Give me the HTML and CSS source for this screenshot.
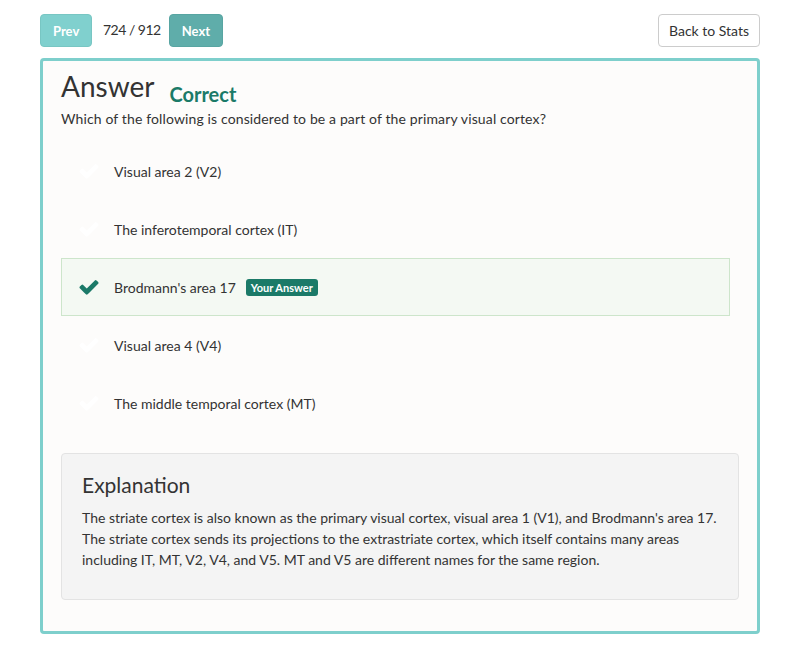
FILE: index.html
```html
<!DOCTYPE html>
<html>
<head>
<meta charset="utf-8">
<link rel="stylesheet" href="styles.css">
</head>
<body>
<div class="page">
  <div class="toolbar">
    <button class="btn btn-prev">Prev</button>
    <span class="counter">724 / 912</span>
    <button class="btn btn-next">Next</button>
    <button class="btn btn-back">Back to Stats</button>
  </div>
  <div class="card">
    <div class="heading">
      <h2 class="title">Answer</h2>
      <span class="status">Correct</span>
    </div>
    <p class="question">Which of the following is considered to be a part of the primary visual cortex?</p>
    <ul class="options">
      <li class="option">
        <svg class="check" viewBox="0 0 1792 1792"><path d="M1671 566q0 40-28 68l-724 724-136 136q-28 28-68 28t-68-28l-136-136-362-362q-28-28-28-68t28-68l136-136q28-28 68-28t68 28l294 295 656-657q28-28 68-28t68 28l136 136q28 28 28 68z"/></svg>
        <span>Visual area 2 (V2)</span>
      </li>
      <li class="option">
        <svg class="check" viewBox="0 0 1792 1792"><path d="M1671 566q0 40-28 68l-724 724-136 136q-28 28-68 28t-68-28l-136-136-362-362q-28-28-28-68t28-68l136-136q28-28 68-28t68 28l294 295 656-657q28-28 68-28t68 28l136 136q28 28 28 68z"/></svg>
        <span>The inferotemporal cortex (IT)</span>
      </li>
      <li class="option selected">
        <svg class="check" viewBox="0 0 1792 1792"><path d="M1671 566q0 40-28 68l-724 724-136 136q-28 28-68 28t-68-28l-136-136-362-362q-28-28-28-68t28-68l136-136q28-28 68-28t68 28l294 295 656-657q28-28 68-28t68 28l136 136q28 28 28 68z"/></svg>
        <span>Brodmann's area 17</span>
        <span class="badge">Your Answer</span>
      </li>
      <li class="option">
        <svg class="check" viewBox="0 0 1792 1792"><path d="M1671 566q0 40-28 68l-724 724-136 136q-28 28-68 28t-68-28l-136-136-362-362q-28-28-28-68t28-68l136-136q28-28 68-28t68 28l294 295 656-657q28-28 68-28t68 28l136 136q28 28 28 68z"/></svg>
        <span>Visual area 4 (V4)</span>
      </li>
      <li class="option">
        <svg class="check" viewBox="0 0 1792 1792"><path d="M1671 566q0 40-28 68l-724 724-136 136q-28 28-68 28t-68-28l-136-136-362-362q-28-28-28-68t28-68l136-136q28-28 68-28t68 28l294 295 656-657q28-28 68-28t68 28l136 136q28 28 28 68z"/></svg>
        <span>The middle temporal cortex (MT)</span>
      </li>
    </ul>
    <div class="explanation">
      <h3 class="exp-title">Explanation</h3>
      <p class="exp-text">The striate cortex is also known as the primary visual cortex, visual area 1 (V1), and Brodmann's area 17. The striate cortex sends its projections to the extrastriate cortex, which itself contains many areas including IT, MT, V2, V4, and V5. MT and V5 are different names for the same region.</p>
    </div>
  </div>
</div>
</body>
</html>
```

FILE: styles.css
```css
* { box-sizing: border-box; }
body {
  margin: 0;
  background: #fff;
  color: #333;
  font-family: Lato, "Open Sans", sans-serif;
  font-size: 14px;
}
.page { padding: 14px 40px; }
.toolbar {
  display: flex;
  align-items: center;
  height: 33px;
}
.btn {
  font-family: inherit;
  height: 33px;
  border-radius: 4px;
  font-size: 13px;
  cursor: pointer;
  padding: 0 12px;
}
.btn-prev {
  width: 52px;
  background: #80d0ce;
  border: 1px solid #78c6c3;
  color: #fff;
  font-weight: 700;
}
.btn-next {
  width: 54px;
  background: #5fadaa;
  border: 1px solid #58a5a2;
  color: #fff;
  font-weight: 700;
}
.counter {
  margin: 0 8px 2px 11px;
  font-size: 14px;
  letter-spacing: -0.5px;
  color: #333;
}
.btn-back {
  margin-left: auto;
  width: 102px;
  background: #fff;
  border: 1px solid #ccc;
  color: #333;
  font-size: 14px;
  padding: 0;
}
.card {
  margin-top: 11px;
  border: 3px solid #7ecfcc;
  border-radius: 4px;
  background: #fdfcfb;
  padding: 9px 18px 31px;
}
.heading { display: flex; align-items: flex-end; }
.title {
  margin: 0;
  font-size: 28px;
  font-weight: 400;
  line-height: 32px;
  color: #333;
}
.status {
  margin-left: 15px;
  font-size: 20px;
  font-weight: 700;
  color: #1b7a68;
  line-height: 20px;
  margin-bottom: -2px;
}
.question {
  margin: 7px 0 13px;
  line-height: 20px;
  letter-spacing: 0.13px;
}
.options {
  list-style: none;
  margin: 0 9px 0 0;
  padding: 0;
}
.option {
  height: 58px;
  display: flex;
  align-items: center;
  padding-left: 16px;
  border: 1px solid transparent;
  color: #333;
}
.option.selected {
  background: #f4f9f3;
  border-color: #cde5cb;
}
.check {
  width: 22px;
  height: 22px;
  margin-right: 14px;
  fill: #fff;
}
.selected .check { fill: #1b7a68; }
.badge {
  margin-left: 10px;
  background: #1b7a68;
  color: #fff;
  font-size: 11px;
  font-weight: 700;
  padding: 2px 5px;
  border-radius: 3px;
  line-height: 13px;
}
.explanation {
  margin-top: 21px;
  background: #f4f4f4;
  border: 1px solid #e3e3e3;
  border-radius: 4px;
  padding: 18px 20px 29px;
}
.exp-title {
  margin: 0;
  font-size: 21px;
  font-weight: 400;
  line-height: 26px;
  color: #333;
}
.exp-text {
  margin: 9px 0 0;
  line-height: 21px;
  font-size: 14px;
}
```
